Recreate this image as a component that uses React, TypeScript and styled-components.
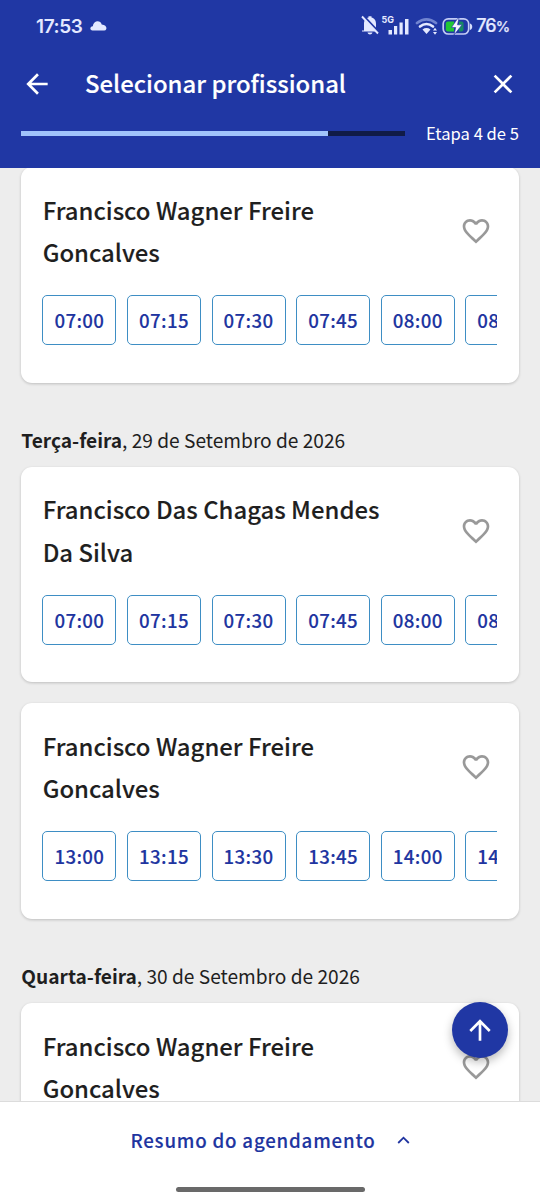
import React from "react";
import styled, { createGlobalStyle } from "styled-components";
import { MdArrowBack, MdArrowUpward, MdClose, MdFavoriteBorder } from "react-icons/md";

const GlobalStyle = createGlobalStyle`
  * { box-sizing: border-box; }
  body { margin: 0; background: #ededed; }
  button { font: inherit; border: 0; padding: 0; background: none; color: inherit; }
`;

const Screen = styled.div`
  position: relative;
  display: flex;
  flex-direction: column;
  width: 540px;
  height: 1200px;
  overflow: hidden;
  background: #ededed;
  color: #1f1f1f;
  font-family: "Noto Sans CJK SC", "Noto Sans", sans-serif;
`;

const Header = styled.header`
  flex: none;
  height: 168px;
  background: #2037a4;
  color: #fff;
`;

const StatusBar = styled.div`
  display: flex;
  align-items: center;
  justify-content: space-between;
  height: 51px;
  padding: 0 31px 0 36px;
  color: #e4e9ff;
  font-family: Inter, sans-serif;
  font-weight: 600;
`;

const StatusGroup = styled.div<{ $gap: number }>`
  display: flex;
  align-items: center;
  gap: ${(p) => p.$gap}px;
`;

const Clock = styled.span`
  padding-top: 1px;
  font-size: 19px;
  letter-spacing: -0.4px;
`;

const Battery = styled.span`
  font-size: 18px;
  font-weight: 500;
  letter-spacing: -1.2px;
  -webkit-text-stroke: 0.2px currentColor;
  small { margin-left: 0.5px; font-size: 14.5px; }
`;

const TitleRow = styled.div`
  display: flex;
  align-items: center;
  height: 66px;
  padding: 0 21px;
`;

const IconButton = styled.button`
  display: flex;
  flex: none;
  width: 32px;
  height: 32px;
`;

const Title = styled.h1`
  flex: 1;
  margin: 0 0 0 32px;
  padding-bottom: 2px;
  font-size: 23.9px;
  font-weight: 500;
  line-height: 32px;
  -webkit-text-stroke: 0.15px currentColor;
`;

const StepRow = styled.div`
  display: flex;
  align-items: center;
  justify-content: space-between;
  height: 33px;
  padding: 0 21px;
`;

const Track = styled.div`
  width: 384px;
  height: 5px;
  background: #101b47;
`;

const Progress = styled.div`
  width: 80%;
  height: 100%;
  background: #a0c3fb;
`;

const StepText = styled.span`
  font-size: 16.6px;
  padding-bottom: 1px;
  line-height: 24px;
  white-space: nowrap;
`;

const List = styled.main`
  flex: 1;
  min-height: 0;
  overflow: hidden;
  padding: 0 21.33px;
`;

const Day = styled.section<{ $scrolled?: boolean }>`
  display: flex;
  flex-direction: column;
  gap: 21px;
  margin-top: ${(p) => (p.$scrolled ? -0.7 : 44.5)}px;
`;

const DayHeading = styled.h2`
  margin: 0 0 -7px;
  font-size: 19.15px;
  font-weight: 400;
  line-height: 26px;
  strong { font-weight: 700; }
`;

const Card = styled.article`
  flex: none;
  height: 215.3px;
  padding: 21.33px;
  border-radius: 11px;
  background: #fff;
  box-shadow: 0 1px 3px rgba(0, 0, 0, 0.2);
`;

const CardTop = styled.div`
  display: flex;
  align-items: center;
  justify-content: space-between;
  height: 85.33px;
  padding-right: 5px;
`;

const Name = styled.h3`
  width: 350px;
  margin: 0;
  font-size: 23.9px;
  font-weight: 500;
  line-height: 42.67px;
  -webkit-text-stroke: 0.12px currentColor;
`;

const Favorite = styled(IconButton)`
  color: #999;
`;

const Slots = styled.div`
  display: flex;
  gap: 10.6px;
  margin: 21.33px 0 0 -0.3px;
  overflow: hidden;
`;

const Slot = styled.button`
  flex: none;
  width: 74px;
  height: 50px;
  padding-bottom: 2px;
  border: 1.33px solid #3e8ec4;
  border-radius: 5px;
  color: #2034a0;
  font-size: 18.7px;
  font-weight: 500;
  letter-spacing: 0.35px;
  -webkit-text-stroke: 0.12px currentColor;
`;

const Summary = styled.footer`
  display: flex;
  flex: none;
  flex-direction: column;
  align-items: center;
  height: 99px;
  padding-top: 22px;
  border-top: 1px solid #dcdcdc;
  background: #fff;
`;

const SummaryButton = styled.button`
  display: flex;
  align-items: center;
  gap: 21px;
  height: 30px;
  color: #2034a0;
  font-size: 18.7px;
  font-weight: 500;
  letter-spacing: 0.8px;
  -webkit-text-stroke: 0.12px currentColor;
  svg { margin-top: 1px; }
`;

const HomeBar = styled.div`
  width: 189px;
  height: 5px;
  margin-top: 33px;
  border-radius: 3px;
  background: #696969;
`;

const ScrollTop = styled.button`
  position: absolute;
  right: 32px;
  bottom: 142px;
  display: grid;
  place-items: center;
  width: 56px;
  height: 56px;
  border-radius: 50%;
  background: #2037a4;
  color: #fff;
  box-shadow: 0 4px 10px rgba(0, 0, 0, 0.28);
`;

const StatusIcons = () => (
  <svg width="113" height="24" viewBox="0 1.5 113 24" fill="none">
    <path d="M4 18v-6.500c0-4 2-6 4.500-6.500V3.800h3V5c2.500.5 4.500 2.500 4.500 6.500v5l2 1.500v1H2v-1zM7.500 20h5c-.5 2.500-4.500 2.500-5 0z" fill="#e4e9ff" />
    <path d="M3.500 3.500 19.500 20.500" stroke="#2037a4" strokeWidth="2.500" />
    <path d="M2 4 18 21" stroke="#e4e9ff" strokeWidth="1.900" />
    <text x="21.500" y="10.200" fill="#e4e9ff" fontFamily="Inter" fontSize="9.500" fontWeight="700" textLength="12.500" lengthAdjust="spacingAndGlyphs">5G</text>
    <path d="M28.500 17.500V22h3.500v-4.500zM34 13.500V22h3.200v-8.500zM39.500 10v12h3.200V10zM45 6.500V22h3.500V6.500z" fill="#e4e9ff" />
    <path d="M57 10.500c6-4.700 13-4.700 19 0" stroke="#7184d0" strokeWidth="2.700" strokeLinecap="round" />
    <path d="M60 14c4-3.300 9-3.300 13 0" stroke="#e4e9ff" strokeWidth="2.700" strokeLinecap="round" />
    <path d="M62.500 17c2.500-1.900 5.500-1.900 8 0L66.500 21.500zM73 18l2-2.700 2 2.700zM73 19.500l2 2.700 2-2.700z" fill="#e4e9ff" />
    <rect x="83.200" y="6.300" width="25.500" height="15.200" rx="5" stroke="#c3cdf5" strokeWidth="1.700" />
    <path d="M110 11c3 .5 3 6 0 6.500z" fill="#d8dffc" />
    <path d="M88 9h6v10h-6q-2.200 0-2.200-2v-6q0-2 2.200-2z" fill="#1fc735" />
    <path d="M99 9h2.500q2 0 2 2v6q0 2-2 2H99z" fill="#168b62" />
    <path d="M98 5.500 91.500 15h4.200L94 22.500l8-10.200h-4.500L99 5.500z" fill="#f4f6ff" stroke="#2037a4" strokeWidth=".6" />
  </svg>
);

const MORNING = ["07:00", "07:15", "07:30", "07:45", "08:00", "08:15"];
const AFTERNOON = ["13:00", "13:15", "13:30", "13:45", "14:00", "14:15"];

const Professional = ({ name, times = [] }: { name: string; times?: string[] }) => (
  <Card>
    <CardTop>
      <Name>{name}</Name>
      <Favorite aria-label="Favoritar"><MdFavoriteBorder size={32} /></Favorite>
    </CardTop>
    <Slots>{times.map((time) => <Slot key={time}>{time}</Slot>)}</Slots>
  </Card>
);

export default function App() {
  return (
    <Screen>
      <GlobalStyle />
      <Header>
        <StatusBar>
          <StatusGroup $gap={8}>
            <Clock>17:53</Clock>
            <svg width="17" height="10" viewBox="0 0 17 10">
              <path d="M2.500 9.500C-.5 9.500-.3 5.500 2.800 5.300 3.500-.8 10.500-1 11.700 3.400c4 .3 5.300 2.800 4.500 4.800q-.5 1.300-2 1.300z" fill="#e4e9ff" />
            </svg>
          </StatusGroup>
          <StatusGroup $gap={3.5}>
            <StatusIcons />
            <Battery>76<small>%</small></Battery>
          </StatusGroup>
        </StatusBar>
        <TitleRow>
          <IconButton aria-label="Voltar"><MdArrowBack size={32} /></IconButton>
          <Title>Selecionar profissional</Title>
          <IconButton aria-label="Fechar"><MdClose size={32} /></IconButton>
        </TitleRow>
        <StepRow>
          <Track><Progress /></Track>
          <StepText>Etapa 4 de 5</StepText>
        </StepRow>
      </Header>
      <List>
        <Day $scrolled>
          <Professional name="Francisco Wagner Freire Goncalves" times={MORNING} />
        </Day>
        <Day>
          <DayHeading><strong>Terça-feira</strong>, 29 de Setembro de 2026</DayHeading>
          <Professional name="Francisco Das Chagas Mendes Da Silva" times={MORNING} />
          <Professional name="Francisco Wagner Freire Goncalves" times={AFTERNOON} />
        </Day>
        <Day>
          <DayHeading><strong>Quarta-feira</strong>, 30 de Setembro de 2026</DayHeading>
          <Professional name="Francisco Wagner Freire Goncalves" />
        </Day>
      </List>
      <Summary>
        <SummaryButton>
          Resumo do agendamento
          <svg width="13" height="8" viewBox="0 0 13 8" fill="none">
            <path d="M1.200 7 6.500 1.700 11.800 7" stroke="currentColor" strokeWidth="1.800" />
          </svg>
        </SummaryButton>
        <HomeBar />
      </Summary>
      <ScrollTop aria-label="Voltar ao topo"><MdArrowUpward size={32} /></ScrollTop>
    </Screen>
  );
}
